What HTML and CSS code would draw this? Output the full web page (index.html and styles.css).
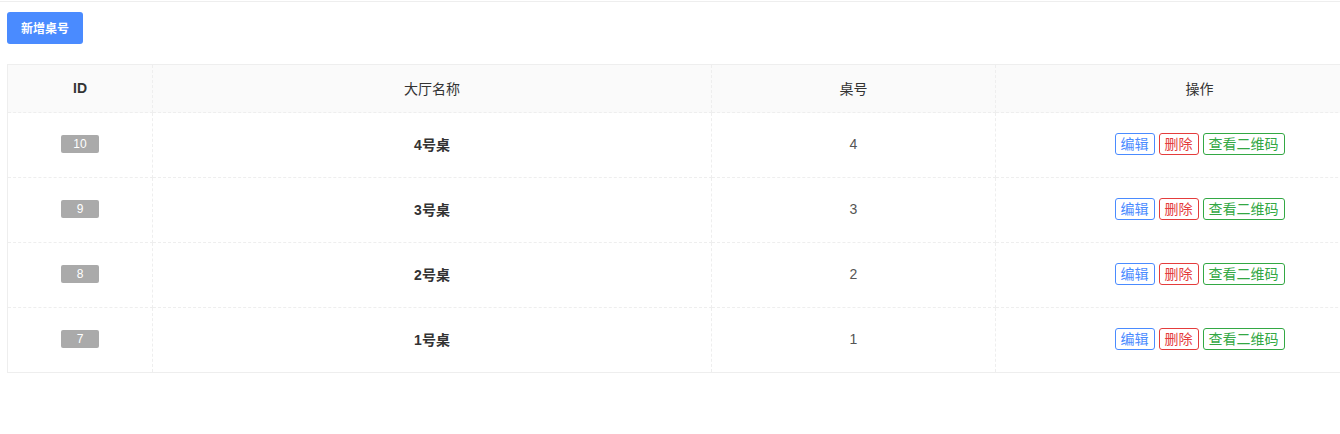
FILE: index.html
```html
<html>
    <head>
        <meta charset="utf-8">
        <title>桌号管理</title>
        <link rel="stylesheet" href="styles.css">
    </head>
    <body>
        <!-- 页面容器 -->
        <div class="page">
            <!-- 工具栏 -->
            <div class="toolbar">
                <a class="btn-add" href="javascript:;">新增桌号</a>
            </div>
            <!-- 桌号列表 -->
            <table class="desk-table">
                <colgroup>
                    <col class="col-id">
                    <col class="col-hall">
                    <col class="col-no">
                    <col class="col-op">
                </colgroup>
                <thead>
                    <tr>
                        <th>ID</th>
                        <th class="normal">大厅名称</th>
                        <th class="normal">桌号</th>
                        <th class="normal">操作</th>
                    </tr>
                </thead>
                <tbody>
                    <tr>
                        <td><span class="badge">10</span></td>
                        <td class="name">4号桌</td>
                        <td class="num">4</td>
                        <td><div class="ops"><a class="op op-edit" href="javascript:;">编辑</a><a class="op op-del" href="javascript:;">删除</a><a class="op op-qr" href="javascript:;">查看二维码</a></div></td>
                    </tr>
                    <tr>
                        <td><span class="badge">9</span></td>
                        <td class="name">3号桌</td>
                        <td class="num">3</td>
                        <td><div class="ops"><a class="op op-edit" href="javascript:;">编辑</a><a class="op op-del" href="javascript:;">删除</a><a class="op op-qr" href="javascript:;">查看二维码</a></div></td>
                    </tr>
                    <tr>
                        <td><span class="badge">8</span></td>
                        <td class="name">2号桌</td>
                        <td class="num">2</td>
                        <td><div class="ops"><a class="op op-edit" href="javascript:;">编辑</a><a class="op op-del" href="javascript:;">删除</a><a class="op op-qr" href="javascript:;">查看二维码</a></div></td>
                    </tr>
                    <tr>
                        <td><span class="badge">7</span></td>
                        <td class="name">1号桌</td>
                        <td class="num">1</td>
                        <td><div class="ops"><a class="op op-edit" href="javascript:;">编辑</a><a class="op op-del" href="javascript:;">删除</a><a class="op op-qr" href="javascript:;">查看二维码</a></div></td>
                    </tr>
                </tbody>
            </table>
        </div>
    </body>
</html>
```

FILE: styles.css
```css
*{
    margin: 0;
    padding: 0;
    box-sizing: border-box;
}
html, body{
    overflow: hidden;
    background-color: #fff;
    font-family: "Liberation Sans", "Noto Sans CJK SC", sans-serif;
    color: #333;
}
/* 页面容器 */
.page{
    margin-top: 1px;
    border-top: 1px solid #eee;
    padding: 10px 7px;
}
.toolbar{
    display: flex;
    margin-bottom: 20px;
}
/* 新增按钮 */
.btn-add{
    display: flex;
    align-items: center;
    height: 32px;
    padding: 0 14px 1px;
    background-color: #4a8bff;
    border-radius: 3px;
    color: #fff;
    font-size: 12px;
    font-weight: bold;
    text-decoration: none;
}
/* 表格 */
.desk-table{
    width: 1396px;
    border-collapse: collapse;
    border: 1px solid #eee;
    table-layout: fixed;
}
.col-id{ width: 145px; }
.col-hall{ width: 559px; }
.col-no{ width: 284px; }
.col-op{ width: 408px; }
.desk-table th,
.desk-table td{
    border: 1px dashed #eee;
    text-align: center;
    font-size: 14px;
    padding-bottom: 2px;
}
.desk-table th{
    height: 48px;
    background-color: #fafafa;
    font-weight: bold;
    color: #333;
}
.desk-table th.normal{
    font-weight: normal;
    color: #333;
}
.desk-table td{
    height: 65px;
}
.desk-table td.name{
    font-weight: bold;
    color: #333;
}
.desk-table td.num{
    color: #555;
}
/* ID标签 */
.badge{
    display: inline-block;
    width: 38px;
    height: 18px;
    line-height: 18px;
    background-color: #aaa;
    border-radius: 2px;
    color: #fff;
    font-size: 12px;
}
/* 操作按钮 */
.ops{
    display: flex;
    justify-content: center;
    gap: 4px;
}
.op{
    height: 22px;
    line-height: 20px;
    padding: 0 5px;
    border: 1px solid;
    border-radius: 3px;
    font-size: 14px;
    text-decoration: none;
}
.op-edit{
    color: #4a8bff;
    border-color: #4a8bff;
}
.op-del{
    color: #e43c3c;
    border-color: #e43c3c;
}
.op-qr{
    color: #33a844;
    border-color: #33a844;
}
```
